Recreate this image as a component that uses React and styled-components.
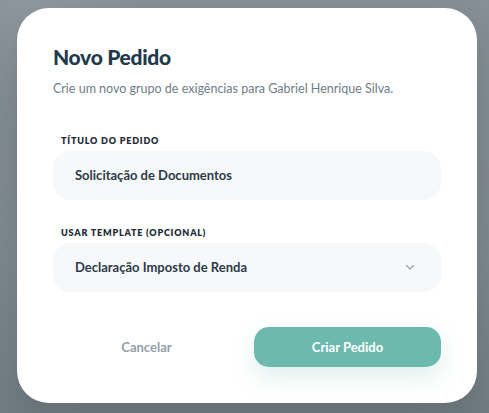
import React from 'react';
import styled, { createGlobalStyle } from 'styled-components';

const GlobalStyle = createGlobalStyle`
  html, body {
    margin: 0;
    padding: 0;
  }
  body {
    font-family: Lato, 'Open Sans', sans-serif;
    background: #7d888e;
  }
  * {
    box-sizing: border-box;
  }
`;

const Backdrop = styled.div`
  width: 489px;
  height: 413px;
  padding: 8px 12px 10px 17px;
  background:
    radial-gradient(circle at 40px 0px, rgba(150, 160, 165, 0.5), rgba(150, 160, 165, 0) 110px),
    linear-gradient(180deg, #858f95 0%, #7e898f 60%, #727d83 100%);
  overflow: hidden;
`;

const Card = styled.div`
  width: 460px;
  height: 395px;
  background: #ffffff;
  border-radius: 32px;
  padding: 36px 36px 36px 36px;
  display: flex;
  flex-direction: column;
  box-shadow: 0 18px 36px rgba(30, 40, 50, 0.16);
`;

const Title = styled.h2`
  margin: 0;
  font-size: 21px;
  font-weight: 900;
  letter-spacing: -0.3px;
  color: #1f3a4c;
  line-height: 26px;
`;

const Subtitle = styled.p`
  margin: 9px 0 0 0;
  font-size: 12.5px;
  line-height: 20px;
  color: #6f7d88;
`;

const Field = styled.div`
  margin-top: ${(p) => p.$gap}px;
  display: flex;
  flex-direction: column;
  gap: 4px;
`;

const Label = styled.label`
  padding-left: 8px;
  font-size: 9px;
  font-weight: 800;
  letter-spacing: 0.8px;
  color: #1f2c38;
  text-transform: uppercase;
  line-height: 12px;
`;

const Box = styled.div`
  height: 49px;
  border-radius: 18px;
  background: #f6f8fa;
  padding: 0 22px 2px 22px;
  display: flex;
  align-items: center;
  justify-content: space-between;
  font-size: 13px;
  font-weight: 700;
  color: #2d3b48;
`;

const Chevron = styled.svg`
  width: 12px;
  height: 12px;
  margin-right: 3px;
  color: #9aa5b1;
`;

const Actions = styled.div`
  margin-top: 35px;
  display: grid;
  grid-template-columns: 1fr 1fr;
  gap: 14px;
`;

const Button = styled.button`
  height: 40px;
  border: none;
  border-radius: 15px;
  font-family: inherit;
  font-size: 13px;
  font-weight: 700;
  cursor: pointer;
  background: ${(p) => (p.$primary ? '#6cb9ae' : 'transparent')};
  color: ${(p) => (p.$primary ? '#ffffff' : '#94a0ab')};
  box-shadow: ${(p) => (p.$primary ? '0 10px 22px rgba(108, 185, 174, 0.22)' : 'none')};
`;

export default function App() {
  return (
    <>
      <GlobalStyle />
      <Backdrop>
        <Card>
          <Title>Novo Pedido</Title>
          <Subtitle>Crie um novo grupo de exigências para Gabriel Henrique Silva.</Subtitle>
          <Field $gap={36}>
            <Label>Título do Pedido</Label>
            <Box>Solicitação de Documentos</Box>
          </Field>
          <Field $gap={27}>
            <Label>Usar Template (Opcional)</Label>
            <Box>
              Declaração Imposto de Renda
              <Chevron viewBox="0 0 24 24" fill="none" stroke="currentColor" strokeWidth="2.5" strokeLinecap="round" strokeLinejoin="round">
                <path d="M5 9l7 7 7-7" />
              </Chevron>
            </Box>
          </Field>
          <Actions>
            <Button>Cancelar</Button>
            <Button $primary>Criar Pedido</Button>
          </Actions>
        </Card>
      </Backdrop>
    </>
  );
}
